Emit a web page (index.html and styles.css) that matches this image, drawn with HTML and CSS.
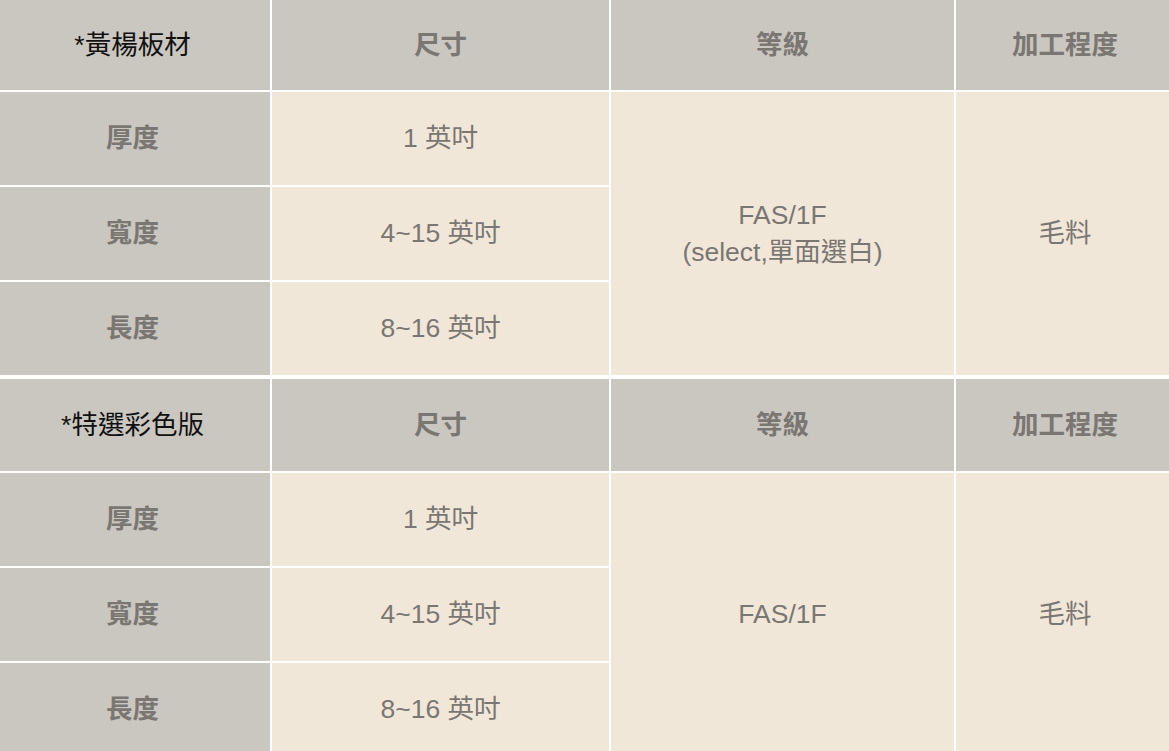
FILE: index.html
```html
<!DOCTYPE html>
<html lang="zh-Hant">
<head>
<meta charset="utf-8">
<title>黃楊板材</title>
<link rel="stylesheet" href="styles.css">
</head>
<body>
<div class="page">
  <div class="spec spec-first">
    <div class="cell head title">*黃楊板材</div>
    <div class="cell head">尺寸</div>
    <div class="cell head">等級</div>
    <div class="cell head">加工程度</div>

    <div class="cell label r1">厚度</div>
    <div class="cell val r1">1 英吋</div>
    <div class="cell val span grade">FAS/1F<br>(select,單面選白)</div>
    <div class="cell val span proc">毛料</div>

    <div class="cell label r2">寬度</div>
    <div class="cell val r2">4~15 英吋</div>

    <div class="cell label r3">長度</div>
    <div class="cell val r3">8~16 英吋</div>
  </div>

  <div class="spec">
    <div class="cell head title">*特選彩色版</div>
    <div class="cell head">尺寸</div>
    <div class="cell head">等級</div>
    <div class="cell head">加工程度</div>

    <div class="cell label r1">厚度</div>
    <div class="cell val r1">1 英吋</div>
    <div class="cell val span grade">FAS/1F</div>
    <div class="cell val span proc">毛料</div>

    <div class="cell label r2">寬度</div>
    <div class="cell val r2">4~15 英吋</div>

    <div class="cell label r3">長度</div>
    <div class="cell val r3">8~16 英吋</div>
  </div>
</div>
</body>
</html>
```
FILE: styles.css
```css
* { box-sizing: border-box; }
html, body {
  margin: 0;
  padding: 0;
  background: #ffffff;
  overflow: hidden;
}
body {
  font-family: "Liberation Sans", Arial, "Noto Sans CJK TC", sans-serif;
  font-size: 26.5px;
  color: #7a7672;
}
.page {
  width: 1174px;
  display: flex;
  flex-direction: column;
  gap: 4px;
}
.spec {
  display: grid;
  grid-template-columns: 270px 337px 343px 1fr;
  grid-template-rows: 92px 93px 93px 93px;
  gap: 2px;
  background: #ffffff;
}
.spec-first {
  grid-template-rows: 90px 93px 93px 93px;
}
.cell {
  display: flex;
  align-items: center;
  justify-content: center;
  text-align: center;
  line-height: 37px;
}
.head {
  background: #cac6c0;
  font-weight: bold;
  grid-row: 1;
}
.head.title {
  font-weight: normal;
  color: #111111;
  padding-right: 5px;
}
.label {
  background: #cac6c0;
  font-weight: bold;
  grid-column: 1;
  padding-right: 5px;
}
.val {
  background: #f0e7d9;
}
.r1 { grid-row: 2; }
.r2 { grid-row: 3; }
.r3 { grid-row: 4; }
.span { grid-row: 2 / 5; }
.grade { grid-column: 3; }
.proc { grid-column: 4; }
```
